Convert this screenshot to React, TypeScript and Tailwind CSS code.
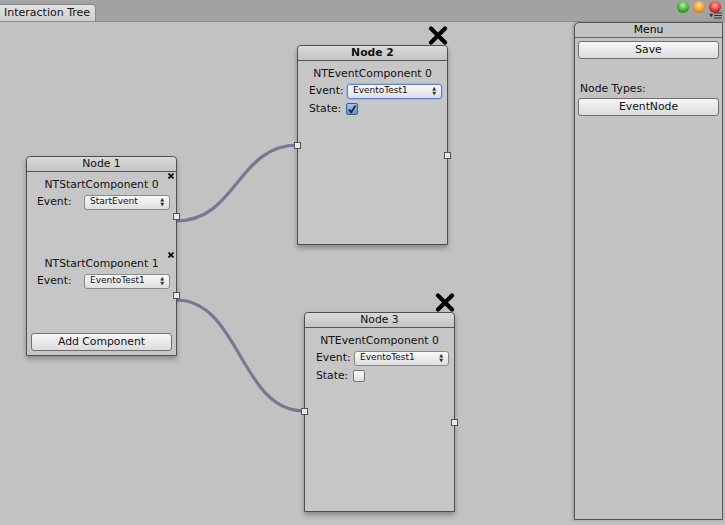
import React from "react";

const font = { fontFamily: '"DejaVu Sans", "Liberation Sans", sans-serif' };

function Port({ side, top }: { side: "left" | "right"; top: number }) {
  return (
    <div
      className={`absolute w-[7px] h-[7px] bg-[#e8e8e8] border border-[#555] z-10 ${side === "left" ? "left-[-4px]" : "right-[-4px]"}`}
      style={{ top }}
    />
  );
}

function Dropdown({ value, width, focused }: { value: string; width: number; focused?: boolean }) {
  return (
    <div
      className={`h-[15px] rounded-[3px] flex items-center justify-between pl-[5px] pr-[5px] text-[9px] text-[#111] bg-gradient-to-b from-[#fafafa] to-[#dedede] ${focused ? "border border-[#5a7fd8] shadow-[0_0_0_1px_#9db7ee]" : "border border-[#8a8a8a]"}`}
      style={{ width }}
    >
      <span>{value}</span>
      <span className="flex flex-col leading-none text-[5px] text-[#333]">
        <span>▲</span>
        <span>▼</span>
      </span>
    </div>
  );
}

function NodeBox({
  title,
  left,
  top,
  selected,
  children,
}: {
  title: string;
  left: number;
  top: number;
  selected?: boolean;
  children: React.ReactNode;
}) {
  return (
    <div
      className="absolute w-[151px] h-[200px] bg-[#c6c6c6] border border-[#4f4f4f] rounded-t-[4px] shadow-[0_3px_5px_rgba(0,0,0,0.3)]"
      style={{ left, top }}
    >
      <div
        className={`h-[15px] border-b border-[#555] rounded-t-[4px] bg-gradient-to-b from-[#dadada] to-[#c4c4c4] flex items-center justify-center text-[10.8px] text-[#111] ${selected ? "font-bold" : ""}`}
      >
        {title}
      </div>
      {children}
    </div>
  );
}

function StartComponent({ index, value }: { index: number; value: string }) {
  return (
    <div className="relative h-[79px] pt-[5px]">
      <div className="text-center text-[10.8px] text-[#111] h-[15px] leading-[15px]">NTStartComponent {index}</div>
      <svg className="absolute right-[2px] top-[1px]" width="6" height="6" viewBox="0 0 6 6">
        <path d="M0.5 0.5 L5.5 5.5 M5.5 0.5 L0.5 5.5" stroke="#000" strokeWidth="1.6" />
      </svg>
      <div className="flex items-center pl-[10px] mt-[2px]">
        <span className="w-[47px] text-[10.8px] text-[#111]">Event:</span>
        <Dropdown value={value} width={86} />
      </div>
      <Port side="right" top={41} />
    </div>
  );
}

function EventNodeBody({ value, checked }: { value: string; checked: boolean }) {
  return (
    <div className="relative pt-[5px]">
      <div className="text-center text-[10.8px] text-[#111] h-[15px] leading-[15px]">NTEventComponent 0</div>
      <div className="flex items-center pl-[11px] mt-[2px]">
        <span className="w-[38px] text-[10.8px] text-[#111]">Event:</span>
        <Dropdown value={value} width={95} focused={checked} />
      </div>
      <div className="flex items-center pl-[11px] mt-[2px]">
        <span className="w-[37px] text-[10.8px] text-[#111]">State:</span>
        {checked ? (
          <div className="w-[12px] h-[12px] rounded-[2px] border border-[#3d5f94] bg-gradient-to-b from-[#a9c4ea] to-[#5f8fd0] flex items-center justify-center">
            <svg width="11" height="11" viewBox="0 0 11 11">
              <path d="M2 5.5 L4.5 8.5 L9.5 1" fill="none" stroke="#1b2a44" strokeWidth="2" />
            </svg>
          </div>
        ) : (
          <div className="w-[12px] h-[12px] rounded-[2px] border border-[#777] bg-gradient-to-b from-[#fbfbfb] to-[#dcdcdc]" />
        )}
      </div>
    </div>
  );
}

function BigX({ left, top }: { left: number; top: number }) {
  return (
    <svg className="absolute" style={{ left, top }} width="20" height="19" viewBox="0 0 20 19">
      <path d="M3 2.5 L17 16.5 M17 2.5 L3 16.5" stroke="#000" strokeWidth="4.2" strokeLinecap="round" />
    </svg>
  );
}

function UnityButton({ label }: { label: string }) {
  return (
    <div className="h-[18px] mx-[3px] rounded-[3px] border border-[#6f6f6f] bg-gradient-to-b from-[#f7f7f7] to-[#dcdcdc] flex items-center justify-center text-[10.8px] text-[#111]">
      {label}
    </div>
  );
}

export default function App() {
  return (
    <div className="w-[725px] h-[525px] flex flex-col bg-[#c2c2c2] overflow-hidden" style={font}>
      {/* Title strip */}
      <div className="relative h-[22px] bg-[#a2a2a2] flex items-end border-b border-[#8d8d8d]">
        <div className="h-[17px] w-[96px] bg-gradient-to-b from-[#e2e2e2] to-[#cfcfcf] border-r border-t border-[#8a8a8a] rounded-tr-[4px] flex items-center pl-[4px] text-[11px] text-[#111] whitespace-nowrap">
          Interaction Tree
        </div>
        <div className="absolute right-[4px] top-[1px] flex gap-[4px]">
          <div className="w-[12px] h-[12px] rounded-full bg-[radial-gradient(circle_at_50%_35%,#b6f2a0,#3aa52a_60%,#1f6e18)]" />
          <div className="w-[12px] h-[12px] rounded-full bg-[radial-gradient(circle_at_50%_35%,#ffe0a0,#f0901c_60%,#a85a08)]" />
          <div className="w-[12px] h-[12px] rounded-full bg-[radial-gradient(circle_at_50%_35%,#ffb0b0,#e02424_60%,#951010)]" />
        </div>
        <div className="absolute right-[3px] top-[12px] flex items-center gap-[1px] text-[#333]">
          <span className="text-[5px] leading-none">▼</span>
          <svg width="8" height="7" viewBox="0 0 8 7">
            <path d="M0 1h8M0 3.5h8M0 6h8" stroke="#333" strokeWidth="1.2" />
          </svg>
        </div>
      </div>

      <div className="flex-1 flex">
        {/* Canvas */}
        <div className="relative flex-1">
          <svg className="absolute left-0 top-0" width="574" height="503">
            <path d="M176 199 C 237 199, 237 123, 298 123" fill="none" stroke="#7c7690" strokeWidth="3.2" />
            <path d="M176 278 C 240 278, 240 389, 304 389" fill="none" stroke="#7c7690" strokeWidth="3.2" />
          </svg>

          <NodeBox title="Node 1" left={26} top={134}>
            <StartComponent index={0} value="StartEvent" />
            <StartComponent index={1} value="EventoTest1" />
            <div className="absolute left-[1px] right-[1px] top-[176px]">
              <UnityButton label="Add Component" />
            </div>
          </NodeBox>

          <NodeBox title="Node 2" left={297} top={23} selected>
            <EventNodeBody value="EventoTest1" checked />
            <Port side="left" top={96} />
            <Port side="right" top={106} />
          </NodeBox>
          <BigX left={428} top={4} />

          <NodeBox title="Node 3" left={304} top={290}>
            <EventNodeBody value="EventoTest1" checked={false} />
            <Port side="left" top={95} />
            <Port side="right" top={106} />
          </NodeBox>
          <BigX left={435} top={271} />
        </div>

        {/* Menu panel */}
        <div className="w-[149px] mr-[2px] mb-[5px] bg-[#c3c3c3] border border-[#555] rounded-tl-[5px] shadow-[-1px_0_3px_rgba(0,0,0,0.25)] flex flex-col">
          <div className="h-[15px] border-b border-[#666] flex items-center justify-center text-[10.8px] text-[#000]">
            Menu
          </div>
          <div className="mt-[3px]">
            <UnityButton label="Save" />
          </div>
          <div className="mt-[22px] pl-[5px] text-[10.8px] text-[#111]">Node Types:</div>
          <div className="mt-[1px]">
            <UnityButton label="EventNode" />
          </div>
        </div>
      </div>
    </div>
  );
}
